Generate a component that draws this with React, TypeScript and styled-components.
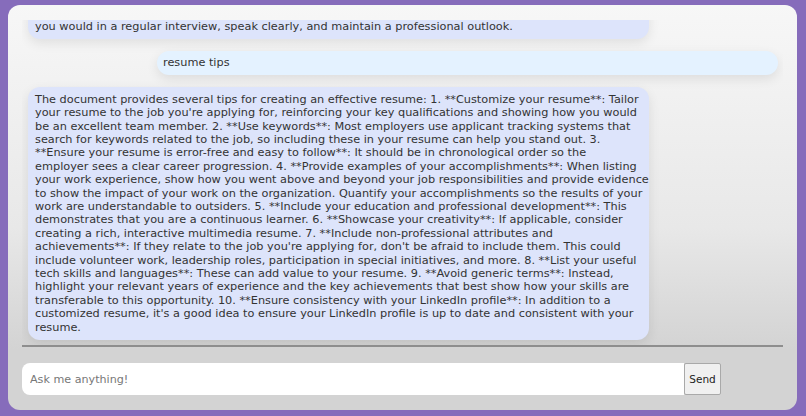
import React, { useState } from 'react';
import styled, { createGlobalStyle } from 'styled-components';

const GlobalStyle = createGlobalStyle`
  html, body {
    height: 100%;
  }
  body {
    margin: 0;
    background: #866cbb;
    font-family: "DejaVu Sans", Verdana, sans-serif;
  }
  #root {
    height: 100%;
  }
  * {
    box-sizing: border-box;
  }
`;

const Card = styled.div`
  height: calc(100% - 11px);
  margin: 5px 9px 6px 8px;
  padding: 15px 14px 15px 14px;
  border-radius: 12px;
  background: linear-gradient(to bottom, #f7f7f7 0%, #e8e8e8 55%, #d3d3d3 85%, #d3d3d3 100%);
  display: flex;
  flex-direction: column;
`;

const ChatList = styled.div`
  flex: 1;
  min-height: 0;
  overflow: hidden;
  display: flex;
  flex-direction: column;
  justify-content: flex-end;
  gap: 12px;
  padding: 0 5px 5px 6px;
  border-bottom: 2px solid #8e8e8e;
`;

const Bubble = styled.div<{ $from: 'bot' | 'user' }>`
  flex-shrink: 0;
  width: 621px;
  align-self: ${p => (p.$from === 'user' ? 'flex-end' : 'flex-start')};
  background: ${p => (p.$from === 'user' ? '#e4f2ff' : '#dde4fb')};
  color: #333;
  font-size: 11.3px;
  line-height: 13.4px;
  padding: ${p => (p.$from === 'user' ? '5px 6px' : '6px 7px')};
  border-radius: 12px;
  box-shadow: 0 4px 12px rgba(0, 0, 0, 0.09);
  white-space: pre;
  overflow: hidden;
`;

const InputRow = styled.form`
  display: flex;
  align-items: stretch;
  margin-top: 16px;
  height: 32px;
`;

const TextInput = styled.input`
  width: 662px;
  border: none;
  outline: none;
  border-radius: 8px 0 0 8px;
  background: #fff;
  padding: 0 8px;
  font-family: "DejaVu Sans", Verdana, sans-serif;
  font-size: 11.15px;
  color: #333;

  &::placeholder {
    color: #777;
  }
`;

const SendButton = styled.button`
  width: 37px;
  border: 1px solid #a9a9a9;
  border-radius: 2px;
  background: #f0f0f0;
  font-family: "DejaVu Sans", Verdana, sans-serif;
  font-size: 10.5px;
  color: #222;
  padding: 0;
  cursor: pointer;
`;

// answers are stored pre-wrapped, one entry per line
const messages: { from: 'bot' | 'user'; lines: string[] }[] = [
  { from: 'user', lines: ['interview tips'] },
  {
    from: 'bot',
    lines: [
      'Preparing for a virtual interview is similar to preparing for an in-person one. Research the company,',
      'review the job description and practice answering common questions. Test your camera, microphone',
      'and internet connection beforehand, choose a quiet, well-lit space, and dress as',
      'you would in a regular interview, speak clearly, and maintain a professional outlook.',
    ],
  },
  { from: 'user', lines: ['resume tips'] },
  {
    from: 'bot',
    lines: [
      'The document provides several tips for creating an effective resume: 1. **Customize your resume**: Tailor',
      "your resume to the job you're applying for, reinforcing your key qualifications and showing how you would",
      'be an excellent team member. 2. **Use keywords**: Most employers use applicant tracking systems that',
      'search for keywords related to the job, so including these in your resume can help you stand out. 3.',
      '**Ensure your resume is error-free and easy to follow**: It should be in chronological order so the',
      'employer sees a clear career progression. 4. **Provide examples of your accomplishments**: When listing',
      'your work experience, show how you went above and beyond your job responsibilities and provide evidence',
      'to show the impact of your work on the organization. Quantify your accomplishments so the results of your',
      'work are understandable to outsiders. 5. **Include your education and professional development**: This',
      'demonstrates that you are a continuous learner. 6. **Showcase your creativity**: If applicable, consider',
      'creating a rich, interactive multimedia resume. 7. **Include non-professional attributes and',
      "achievements**: If they relate to the job you're applying for, don't be afraid to include them. This could",
      'include volunteer work, leadership roles, participation in special initiatives, and more. 8. **List your useful',
      'tech skills and languages**: These can add value to your resume. 9. **Avoid generic terms**: Instead,',
      'highlight your relevant years of experience and the key achievements that best show how your skills are',
      'transferable to this opportunity. 10. **Ensure consistency with your LinkedIn profile**: In addition to a',
      "customized resume, it's a good idea to ensure your LinkedIn profile is up to date and consistent with your",
      'resume.',
    ],
  },
];

export default function App() {
  const [draft, setDraft] = useState('');

  return (
    <>
      <GlobalStyle />
      <Card>
        <ChatList>
          {messages.map((m, i) => (
            <Bubble key={i} $from={m.from}>
              {m.lines.join('\n')}
            </Bubble>
          ))}
        </ChatList>
        <InputRow onSubmit={e => e.preventDefault()}>
          <TextInput
            placeholder="Ask me anything!"
            value={draft}
            onChange={e => setDraft(e.target.value)}
          />
          <SendButton type="submit">Send</SendButton>
        </InputRow>
      </Card>
    </>
  );
}
